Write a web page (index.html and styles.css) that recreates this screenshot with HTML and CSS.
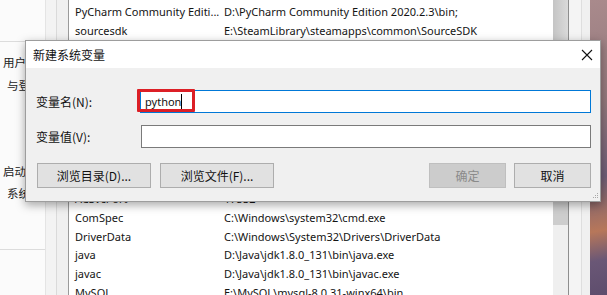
FILE: index.html
```html
<!DOCTYPE html>
<html lang="zh-CN">
<head>
<meta charset="utf-8">
<title>新建系统变量</title>
<link rel="stylesheet" href="styles.css">
</head>
<body>
<div class="desktop">
  <div class="sidepanel">
    <div class="side-line first"></div>
    <div class="side-title t1">用户配置文件</div>
    <div class="side-desc d1">与登录相关的桌面设置</div>
    <div class="side-title t2">启动和故障恢复</div>
    <div class="side-desc d2">系统启动、系统故障和调试信息</div>
    <div class="side-line second"></div>
  </div>
  <div class="band band-a"></div>
  <div class="band band-b"></div>
  <div class="varlist">
    <div class="row"><span class="c1">PyCharm Community Editi...</span><span class="c2">D:\PyCharm Community Edition 2020.2.3\bin;</span></div>
    <div class="row"><span class="c1">sourcesdk</span><span class="c2">E:\SteamLibrary\steamapps\common\SourceSDK</span></div>
    <div class="gap-rows"></div>
    <div class="row"><span class="c1">ACSvcPort</span><span class="c2">17532</span></div>
    <div class="row"><span class="c1">ComSpec</span><span class="c2">C:\Windows\system32\cmd.exe</span></div>
    <div class="row"><span class="c1">DriverData</span><span class="c2">C:\Windows\System32\Drivers\DriverData</span></div>
    <div class="row"><span class="c1">java</span><span class="c2">D:\Java\jdk1.8.0_131\bin\java.exe</span></div>
    <div class="row"><span class="c1">javac</span><span class="c2">D:\Java\jdk1.8.0_131\bin\javac.exe</span></div>
    <div class="row"><span class="c1">MySQL</span><span class="c2">E:\MySQL\mysql-8.0.31-winx64\bin</span></div>
  </div>
  <div class="scroll">
    <div class="thumb thumb-top"></div>
    <div class="track-gap"></div>
    <div class="thumb thumb-sys"></div>
  </div>
  <div class="frame"><div class="frame-inner"></div></div>
  <div class="wall"></div>
</div>

<div class="dialog">
  <div class="titlebar">
    <span class="title">新建系统变量</span>
    <svg class="close" width="12" height="12" viewBox="0 0 12 12"><path d="M1 1 L11 11 M11 1 L1 11" stroke="#111" stroke-width="1.1" fill="none"/></svg>
  </div>
  <div class="dlg-body">
    <div class="field">
      <label class="lbl">变量名(N):</label>
      <div class="input focused"><span class="val">python</span><span class="caret"></span></div>
      <div class="highlight"></div>
    </div>
    <div class="field second">
      <label class="lbl">变量值(V):</label>
      <div class="input"></div>
    </div>
    <div class="buttons">
      <button class="btn wide">浏览目录(D)...</button>
      <button class="btn wide">浏览文件(F)...</button>
      <span class="spacer"></span>
      <button class="btn narrow disabled">确定</button>
      <button class="btn narrow">取消</button>
    </div>
    <svg class="grip" width="7" height="7" viewBox="0 0 7 7">
      <rect x="5" y="0" width="1" height="1" fill="#a8a8a8"/>
      <rect x="3" y="2" width="1" height="1" fill="#a8a8a8"/>
      <rect x="5" y="2" width="1" height="1" fill="#a8a8a8"/>
      <rect x="1" y="4" width="1" height="1" fill="#a8a8a8"/>
      <rect x="3" y="4" width="1" height="1" fill="#a8a8a8"/>
      <rect x="5" y="4" width="1" height="1" fill="#a8a8a8"/>
    </svg>
  </div>
</div>
</body>
</html>
```

FILE: styles.css
```css
html, body {
  margin: 0;
  padding: 0;
}
body {
  width: 607px;
  height: 295px;
  overflow: hidden;
  position: relative;
  font-family: "Noto Sans", "Noto Sans CJK SC", sans-serif;
  font-size: 12px;
  color: #111;
  background: #fff;
}
.desktop {
  display: flex;
  height: 295px;
}
.sidepanel {
  width: 45px;
  flex: none;
  background: #fbfbfb;
  position: relative;
  overflow: hidden;
  white-space: nowrap;
  font-family: "Noto Sans CJK SC", sans-serif;
  font-size: 11.5px;
  color: #222;
}
.side-line {
  height: 1px;
  background: #dcdcdc;
}
.side-line.first { margin-top: 41px; }
.side-line.second { margin-top: 48px; }
.side-title { padding-left: 3px; line-height: 16px; }
.side-desc { padding-left: 7px; line-height: 16px; }
.t1 { margin-top: 12px; }
.d1 { margin-top: 7px; }
.t2 { margin-top: 70px; }
.d2 { margin-top: 6px; }

.band {
  flex: none;
  background: #f3f3f3;
}
.band-a {
  width: 10px;
  border-left: 1px solid #e4e4e4;
}
.band-b {
  width: 11px;
  border-left: 1px solid #dadada;
  border-right: 1px solid #9a9a9a;
  background: #f0f0f0;
}
.varlist {
  width: 478px;
  flex: none;
  background: #fff;
  padding-left: 6px;
  padding-top: 3px;
  overflow: hidden;
}
.row {
  display: flex;
  height: 18.67px;
  line-height: 18.67px;
  white-space: nowrap;
  font-size: 11px;
  color: #141414;
}
.c1 { width: 149px; flex: none; }
.c2 { flex: none; }
.gap-rows { height: 150px; }

.scroll {
  width: 15px;
  flex: none;
  background: #efefef;
  display: flex;
  flex-direction: column;
}
.thumb { background: #cdcdcd; }
.thumb-top {
  height: 40px;
  background: linear-gradient(to right, #c4c4c4, #dadada);
}
.track-gap { height: 155px; }
.thumb-sys { height: 30px; }

.frame {
  width: 21px;
  flex: none;
  border-left: 1px solid #8e8e8e;
  background: #f0f0f0;
  display: flex;
}
.frame-inner {
  width: 12px;
  border-right: 1px solid #dedede;
  background: #f4f4f4;
}
.wall {
  flex: 1;
  background: linear-gradient(170deg, #a98a8c 0%, #93787c 35%, #6f5e77 60%, #b7775a 78%, #6a5776 88%, #5e4d6d 100%);
}

.dialog {
  position: absolute;
  left: 25px;
  top: 40px;
  width: 574px;
  height: 160px;
  border: 1px solid #9d9d9d;
  background: #f0f0f0;
  box-shadow: 0 3px 9px rgba(0, 0, 0, 0.35);
  display: flex;
  flex-direction: column;
  font-family: "Noto Sans", "Noto Sans CJK SC", sans-serif;
}
.titlebar {
  height: 27px;
  background: #fff;
  display: flex;
  align-items: center;
  padding-left: 7px;
  padding-right: 7px;
  flex: none;
}
.title {
  flex: 1;
  font-family: "Noto Sans CJK SC", sans-serif;
  font-size: 12px;
  color: #111;
}
.close { flex: none; }

.dlg-body {
  flex: 1;
  position: relative;
  padding: 22px 9px 0 10px;
}
.field {
  display: flex;
  align-items: center;
  position: relative;
}
.field.second { margin-top: 12px; }
.lbl {
  width: 104px;
  flex: none;
  font-family: "Noto Sans CJK SC", sans-serif;
  font-size: 12px;
  color: #111;
}
.input {
  flex: 1;
  height: 21px;
  border: 1px solid #7a7a7a;
  background: #fff;
  display: flex;
  align-items: center;
  padding-left: 4px;
}
.input.focused { border-color: #0078d7; }
.field.second .input { margin-left: 1px; }
.val { font-size: 11px; color: #111; }
.caret {
  width: 1px;
  height: 15px;
  background: #000;
  margin-left: 0;
}
.highlight {
  position: absolute;
  left: 101px;
  top: -1px;
  width: 52px;
  height: 17px;
  border: 3px solid #dc1f26;
  border-radius: 1px;
}
.buttons {
  display: flex;
  margin-top: 15px;
  padding-left: 1px;
  gap: 9px;
}
.spacer { flex: 1; }
.btn {
  height: 25px;
  border: 1px solid #adadad;
  background: #e1e1e1;
  font-family: "Noto Sans CJK SC", sans-serif;
  font-size: 12px;
  color: #111;
  padding: 0;
}
.btn.wide { width: 114px; }
.btn.narrow { width: 77px; }
.btn.narrow + .btn.narrow { margin-left: -1px; }
.btn.disabled {
  background: #cccccc;
  border-color: #bfbfbf;
  color: #8a8a8a;
}
.grip {
  position: absolute;
  right: 1px;
  bottom: 1px;
}
```
